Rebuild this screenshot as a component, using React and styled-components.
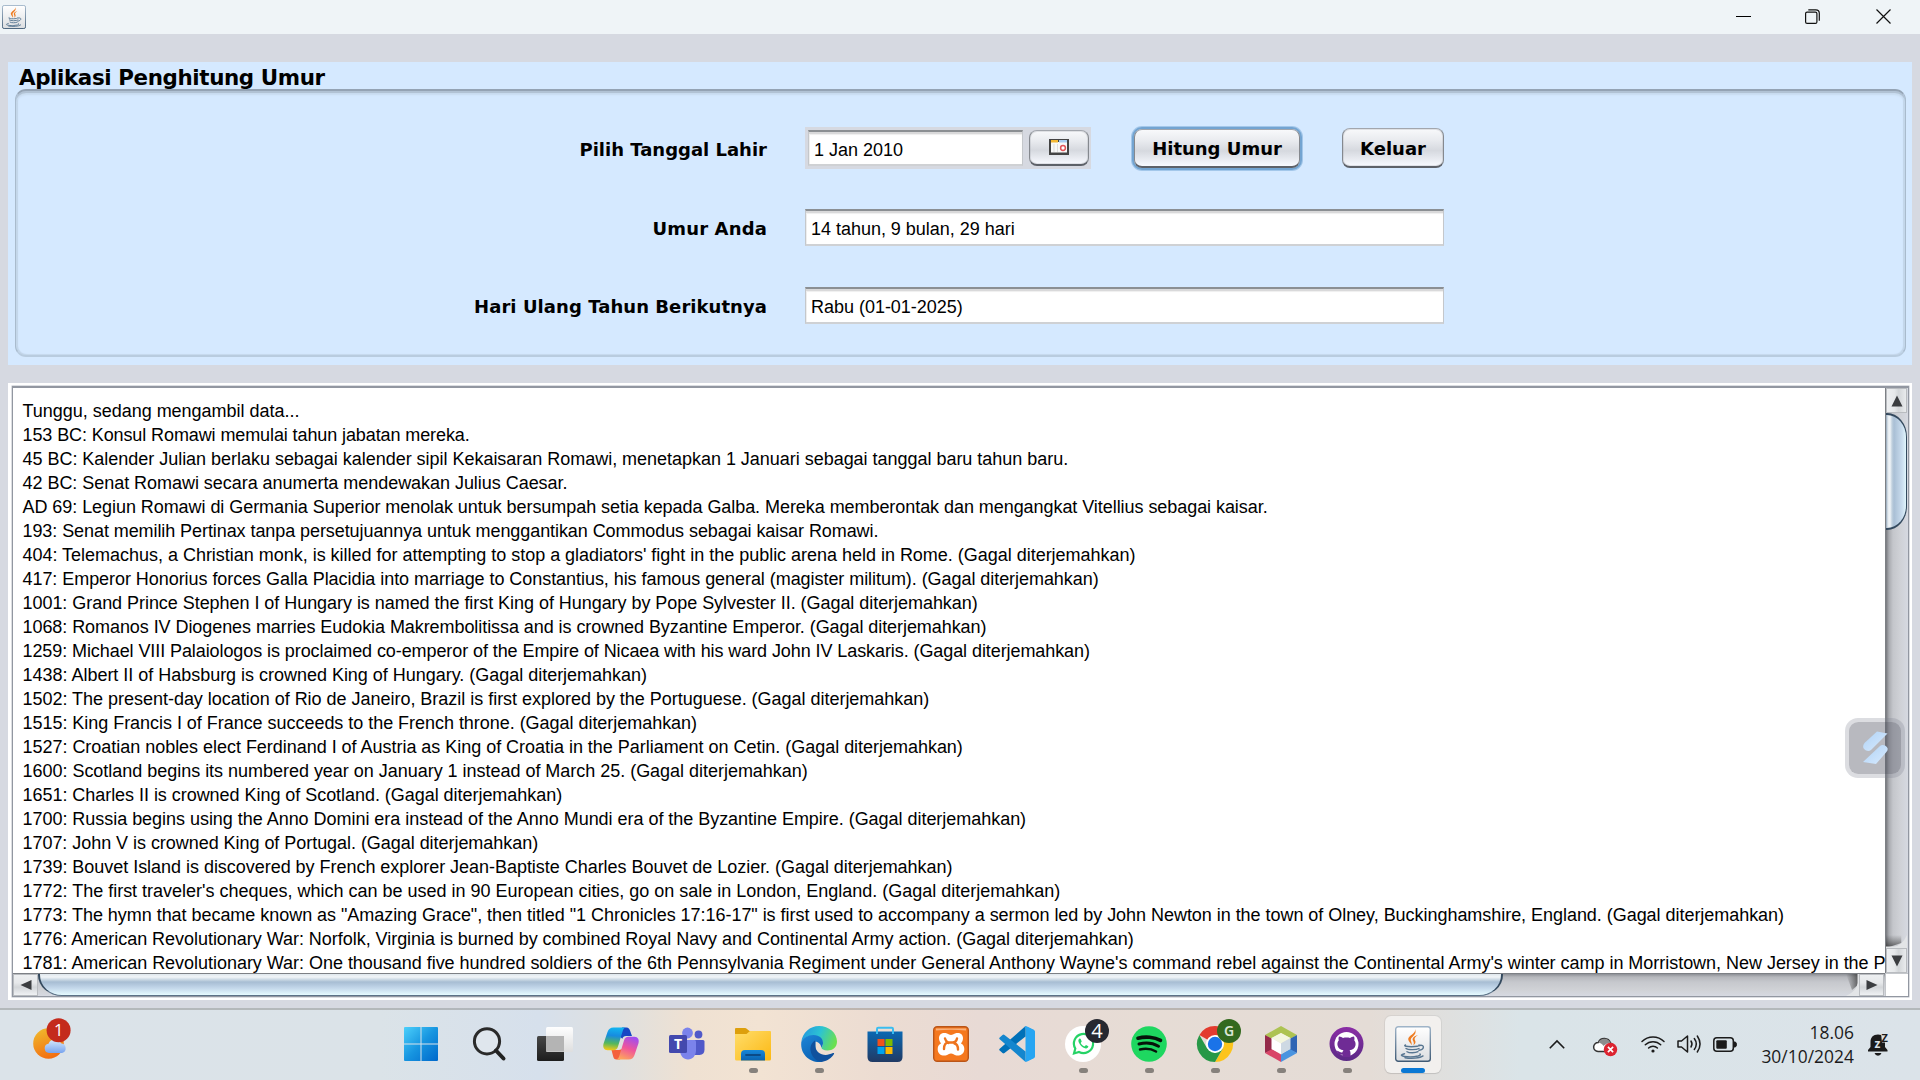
import React from "react";
import styled, { createGlobalStyle } from "styled-components";

const Global = createGlobalStyle`
  html, body { margin: 0; padding: 0; }
  body { width: 1920px; height: 1080px; overflow: hidden; background: #d6d9e1; }
  * { box-sizing: border-box; }
`;

const sans = `"Liberation Sans", Arial, sans-serif`;
const bold = `"DejaVu Sans", Verdana, sans-serif`;
const segoe = `"Open Sans", "Segoe UI", sans-serif`;

const Screen = styled.div`
  position: relative;
  display: flex;
  flex-direction: column;
  width: 1920px;
  height: 1080px;
  overflow: hidden;
  color: #000;
`;

const TitleBar = styled.header`
  display: flex;
  align-items: center;
  justify-content: space-between;
  flex: none;
  height: 34px;
  padding: 0 29px 0 2px;
  background: #eff4f7;
`;

const WindowButtons = styled.div`
  display: flex;
  align-items: center;
  height: 34px;
  padding-bottom: 2px;
`;

const WindowButton = styled.div`
  display: flex;
  justify-content: flex-end;
  width: ${(p) => p.$w}px;
  svg { display: block; }
`;

const Content = styled.main`
  display: flex;
  flex-direction: column;
  flex: none;
  gap: 18px;
  height: 974px;
  padding: 28px 8px 8px;
  background: #d6d9e1;
`;

const Panel = styled.section`
  display: flex;
  flex-direction: column;
  flex: none;
  height: 303px;
  padding: 0 6px 8px 7px;
  background: #d5e9ff;
`;

const PanelTitle = styled.h1`
  flex: none;
  height: 27px;
  margin: 0;
  padding-left: 4px;
  font: bold 21.4px/31px ${bold};
  letter-spacing: -0.38px;
  white-space: nowrap;
`;

const Frame = styled.div`
  display: flex;
  flex-direction: column;
  flex: 1;
  padding: 36px 0 0 300px;
  border: 1px solid #a9bbcd;
  border-top: 2px solid #94a3b4;
  border-bottom: 2px solid #b9ccdf;
  border-radius: 11px;
  box-shadow: inset 0 2px 0 #b1c2d4, inset 0 4px 2px #c8dbef,
    inset 2px 0 1px #c2d5e8, inset -2px 0 1px #c2d5e8, inset 0 -1px 1px #c8dbef;
`;

const FormRow = styled.div`
  display: flex;
  align-items: center;
  height: ${(p) => p.$h}px;
  margin-bottom: ${(p) => p.$mb || 0}px;
`;

const Label = styled.label`
  flex: none;
  width: 451px;
  margin-right: 38px;
  padding-top: ${(p) => p.$pt}px;
  font: bold 18px/24px ${bold};
  letter-spacing: ${(p) => p.$ls}px;
  text-align: right;
  white-space: nowrap;
`;

const Field = styled.div`
  width: ${(p) => p.$w}px;
  height: ${(p) => p.$h}px;
  padding: 6px 5px;
  border: 1px solid #c4c7cb;
  border-top: 2px solid #8b8f93;
  border-bottom: 2px solid #cfd1d4;
  background: #fff;
  box-shadow: inset 0 2px 0 #d9d9da, inset 0 3px 1px #efefef, inset 1px 0 0 #eee;
  font: 18px/24px ${sans};
  letter-spacing: -0.02px;
  white-space: nowrap;
`;

const DatePicker = styled.div`
  display: flex;
  flex: none;
  gap: 6px;
  width: 286px;
  height: 42px;
  padding: 3px 2px 3px 3px;
  background: #d6d9e1;
`;

const Button = styled.button`
  display: flex;
  align-items: center;
  justify-content: center;
  flex: none;
  width: ${(p) => p.$w}px;
  height: ${(p) => p.$h}px;
  margin: ${(p) => p.$m || 0};
  padding: ${(p) => p.$pad || "0 0 1px"};
  border: 1px solid #85898f;
  border-top-color: #a2a6ad;
  border-bottom: 2px solid #5d6168;
  border-radius: 8px;
  background: linear-gradient(#f8f9fb 0%, #e9ebef 30%, #d6d9df 58%, #dfe2e8 70%, #f8faff 100%);
  box-shadow: ${(p) => (p.$focus ? "0 0 0 2px #73a4d1, 0 0 0 3px #a3c7ea" : "inset 0 0 0 1px rgba(150,155,165,.25)")};
  color: #000;
  font: bold 18px/24px ${bold};
  white-space: nowrap;
`;

const ScrollPane = styled.section`
  display: flex;
  flex: none;
  height: 617px;
  padding: 3px 3px 3px 4px;
  background: #fff;
`;

const Viewport = styled.div`
  display: grid;
  grid-template-columns: 1fr 23px;
  grid-template-rows: 1fr 23px;
  width: 1897px;
  border: 1px solid #9297a1;
  border-top: 2px solid #9297a1;
  box-shadow: 0 0 0 0.5px #b9bcc4;
  overflow: hidden;
`;

const TextArea = styled.div`
  min-width: 0;
  padding: 11px 0 0 9.5px;
  background: #fff;
  overflow: hidden;
`;

const Line = styled.div`
  height: 24px;
  font: 18px/24px ${sans};
  letter-spacing: ${(p) => p.$ls || 0}px;
  white-space: pre;
`;

const VBar = styled.div`
  display: flex;
  flex-direction: column;
  min-height: 0;
  padding-right: 1px;
  border-left: 1px solid #7d8085;
  background: linear-gradient(90deg, #77797e 0, #a9abb0 3px, #c4c6cb 7px, #cfd1d6 14px, #d6d9e1 22px);
`;

const HBar = styled.div`
  display: flex;
  min-width: 0;
  padding-right: 1px;
  border-top: 1px solid #7d8085;
  background: linear-gradient(#8d9096 0, #b5b7bc 3px, #c6c8cd 8px, #d0d2d6 16px, #d6d9e1 22px);
`;

const ArrowCell = styled.div`
  display: flex;
  align-items: center;
  justify-content: center;
  flex: none;
  width: ${(p) => p.$w}px;
  height: ${(p) => p.$h}px;
  background: ${(p) =>
    p.$v
      ? "linear-gradient(90deg, #eef0f2, #e6e8ea 40%, #d3d6d9 60%, #eceef0)"
      : "linear-gradient(#eef0f2, #e6e8ea 40%, #d3d6d9 60%, #f3f5f7)"};
  box-shadow: inset 0 0 0 1px #b9bcc0;
`;

const VThumb = styled.div`
  flex: none;
  width: 21px;
  height: 117px;
  border: 2px solid #33495e;
  border-left: 0;
  border-right-width: 1px;
  border-radius: 0 20px 20px 0 / 0 24px 24px 0;
  background: linear-gradient(90deg, #8ea2b5 0, #e4ebf1 2px, #f1f5f8 4px, #c0d0de 6px, #a9bfd5 8px, #c9dcee 16px, #e6fbff 21px);
`;

const HThumb = styled.div`
  flex: none;
  width: 1465px;
  height: 22px;
  border: 1px solid #5c7287;
  border-left: 2px solid #33495e;
  border-right: 2px solid #33495e;
  border-top: 0;
  border-radius: 0 0 24px 24px / 0 0 21px 21px;
  background: linear-gradient(#dfe7ed 0, #f1f5f8 3px, #c5d4e1 6px, #a7bdd3 8px, #c3d7ea 14px, #e6fbff 21px);
`;

const Spacer = styled.div`
  flex: 1;
`;

const Corner = styled.div`
  background: #fff;
  border-left: 1px solid #c4c7cb;
  border-top: 1px solid #c4c7cb;
`;

const FloatingWidget = styled.div`
  position: absolute;
  left: 1845px;
  top: 718px;
  width: 60px;
  height: 60px;
  border: 4px solid rgba(120, 122, 138, 0.26);
  border-radius: 13px;
  background: rgba(85, 87, 102, 0.42);
  background-clip: padding-box;
  svg { display: block; }
`;

const Taskbar = styled.footer`
  display: flex;
  align-items: stretch;
  flex: none;
  height: 72px;
  padding-right: 31px;
  border-top: 2px solid rgba(130, 130, 130, 0.45);
  background: linear-gradient(90deg, #dbe3e9 0, #dbe3e8 380px, #d6e0ec 540px, #dfe0df 620px, #efe1d2 690px, #f2e3d3 760px,
      #ecdcd2 880px, #e8dad5 980px, #e6dcd5 1150px, #e4dcd6 1370px, #dfe0df 1450px, #dae4e8 1520px, #dbe3e9 1920px)
    border-box;
`;

const Widgets = styled.div`
  flex: none;
  width: 388px;
  padding: 8px 0 0 33px;
`;

const TaskCell = styled.div`
  display: flex;
  flex-direction: column;
  align-items: center;
  flex: none;
  width: 66px;
  margin-right: ${(p) => p.$mr || 0}px;
  padding-top: 6px;
`;

const Tile = styled.div`
  display: flex;
  flex-direction: column;
  align-items: center;
  width: 56px;
  height: 57px;
  padding-top: 10px;
  border-radius: 6px;
  background: ${(p) => (p.$active ? "#f2f0ee" : "transparent")};
  box-shadow: ${(p) => (p.$active ? "0 0 0 1px rgba(160,160,160,.18), 0 1px 1px rgba(0,0,0,.1)" : "none")};
  svg { display: block; flex: none; overflow: visible; }
`;

const Indicator = styled.div`
  flex: none;
  width: ${(p) => (p.$active ? 24 : 9)}px;
  height: 5px;
  margin-top: 6px;
  border-radius: 3px;
  background: ${(p) => (p.$active ? "#0a78d4" : "#86817c")};
`;

const Tray = styled.div`
  display: flex;
  align-items: center;
  height: 68px;
  svg { display: block; flex: none; overflow: visible; }
`;

const TrayItem = styled.div`
  flex: none;
  margin-left: ${(p) => p.$ml}px;
  padding-top: ${(p) => p.$pt || 0}px;
`;

const Clock = styled.div`
  flex: none;
  width: 117px;
  margin-right: 14px;
  font: 17.4px/24px ${segoe};
  letter-spacing: 0.03px;
  color: #1b1b1b;
  text-align: right;
`;

function JavaIcon({ size, id }) {
  return (
    <svg width={size} height={size} viewBox="0 0 36 36">
      <defs>
        <linearGradient id={id} x2="0" y2="1"><stop stopColor="#fff" /><stop offset="1" stopColor="#dcdee1" /></linearGradient>
        <linearGradient id={id + "b"} x2="0" y2="1"><stop stopColor="#9fb4c8" /><stop offset="1" stopColor="#3f5a75" /></linearGradient>
      </defs>
      <rect x=".7" y=".7" width="34.6" height="34.6" rx="2.5" fill={`url(#${id})`} stroke={`url(#${id}b)`} strokeWidth="1.4" />
      <path d="M20 3c1.500 4.500-7 6.500-6.800 10.300.1 2.200 2.600 3.500 3.300 6 .8-2.900-1.200-4.200-.6-6.200.8-2.700 6.600-4.600 4.100-10.100zM23 9c-4 1.200-6 3-5.200 5.200.6 1.600 1.700 2.500.5 5.100 3-2.300 2.300-4 1.500-5.300-.8-1.500.5-3.200 3.200-5z" fill="#ee7c22" />
      <g fill="none" stroke="#587691" strokeWidth="1.400" strokeLinecap="round">
        <path d="M10.500 19c-5 2.300 16 2.300 13.500 0" />
        <path d="M11 22.500c2 1.600 10.500 1.500 13 0M12 25.700c2 1.400 8.500 1.400 11 0" />
        <path d="M24.500 19.500c5.500-1.200 5 4-.5 4.800" />
        <path d="M9.500 27.700c-9.500 2.300 5 4.300 13.500 2.300 1.500-.4 3-1 2-2" />
        <path d="M10 31.700c6 1 15 .6 18-1.800" />
      </g>
    </svg>
  );
}

const Badge = ({ x, y, r, fill, color, label, size, weight, family }) => (
  <g>
    <circle cx={x} cy={y} r={r} fill={fill} />
    <text x={x} y={y + size * 0.36} textAnchor="middle" fontSize={size} fontWeight={weight} fill={color} fontFamily={family || "Open Sans, sans-serif"}>{label}</text>
  </g>
);

const WeatherIcon = () => (
  <svg width="40" height="44" viewBox="0 0 40 44">
    <defs>
      <linearGradient id="sun" x1=".2" y1="0" x2=".6" y2="1"><stop stopColor="#f0b92c" /><stop offset="1" stopColor="#f26c12" /></linearGradient>
      <linearGradient id="cloud" x2="0" y2="1"><stop stopColor="#d6e9fd" /><stop offset="1" stopColor="#78a4ef" /></linearGradient>
    </defs>
    <circle cx="15.500" cy="25.500" r="15.300" fill="url(#sun)" />
    <path d="M16 35a4.700 4.700 0 0 1-.5-9.300 7 7 0 0 1 12.500-.5 5 5 0 0 1 1 9.800z" fill="url(#cloud)" />
    <Badge x={25.600} y={12.300} r={12} fill="#c42b1c" color="#fff" label="1" size={16.500} weight={400} />
  </svg>
);

const S = ({ children }) => <svg width="36" height="36" viewBox="0 0 36 36">{children}</svg>;

const WindowsIcon = () => (
  <S>
    <defs><linearGradient id="win" x2="1" y2="1"><stop stopColor="#4cd0fb" /><stop offset=".5" stopColor="#1795e0" /><stop offset="1" stopColor="#0068cb" /></linearGradient></defs>
    <path d="M2 1h15.500v16.500H1V2q0-1 1-1zM18.500 1H34q1 0 1 1v15.500H18.500zM1 18.500h16.500V35H2q-1 0-1-1zM18.500 18.500H35V34q0 1-1 1H18.500z" fill="url(#win)" />
  </S>
);

const SearchIcon = () => (
  <S>
    <circle cx="16" cy="15.300" r="12.600" fill="#e4e9ef" fillOpacity=".6" stroke="#2a2a2a" strokeWidth="3" />
    <path d="M25 24.500l7.500 8" stroke="#222" strokeWidth="4" strokeLinecap="round" />
  </S>
);

const TaskViewIcon = () => (
  <S>
    <defs>
      <linearGradient id="tv1" x2="0" y2="1"><stop stopColor="#474747" /><stop offset="1" stopColor="#1d1d1d" /></linearGradient>
      <linearGradient id="tv2" x2="0" y2="1"><stop stopColor="#fff" /><stop offset="1" stopColor="#dedede" /></linearGradient>
    </defs>
    <rect x="0" y="10" width="27" height="25" rx="1.500" fill="url(#tv1)" />
    <rect x="9" y="1" width="27" height="25" rx="1.500" fill="url(#tv2)" fillOpacity=".97" />
    <rect x="9" y="10" width="18" height="15.500" fill="#b4b4b4" />
  </S>
);

const CopilotIcon = () => (
  <S>
    <defs>
      <linearGradient id="c1" x1=".4" x2=".3" y2="1"><stop stopColor="#12b4f0" /><stop offset=".35" stopColor="#178be0" /><stop offset=".7" stopColor="#55b85c" /><stop offset="1" stopColor="#f5c916" /></linearGradient>
      <linearGradient id="c2" x1=".7" x2=".3" y2="1"><stop stopColor="#a04df0" /><stop offset=".5" stopColor="#f0559a" /><stop offset="1" stopColor="#fda65c" /></linearGradient>
    </defs>
    <path d="M19 1.500h4.500c2 0 3 1.300 3.600 3.200L29 10h-6c-2 0-3 .8-3.600 2.800L16 10z" fill="#1747c4" />
    <path d="M10 24h6l3.500-1L17 33.500h-3.500c-2 0-2.800-1.200-3.300-3L8.500 24z" fill="#f4603c" />
    <path d="M10.500 1.500H23c-1.800.3-2.600 1.400-3.200 3.200L15 20.500c-.8 2.600-2 3.700-4.500 3.700H4.500C1 24.200-.5 21 .6 17.500L4.500 6C5.600 3 7.300 1.500 10.500 1.500z" fill="url(#c1)" />
    <path d="M25.500 33.500H13c1.800-.3 2.600-1.400 3.200-3.200L21 14.500c.8-2.600 2-3.700 4.500-3.700h6c3.500 0 5 3.200 3.900 6.700L31.500 29c-1.100 3-2.800 4.500-6 4.500z" fill="url(#c2)" />
  </S>
);

const TeamsIcon = () => (
  <S>
    <circle cx="29.500" cy="8.500" r="3.900" fill="#5059c9" />
    <path d="M25 14h9q1.500 0 1.500 1.500v8q0 5-5 5.500H25z" fill="#5059c9" />
    <circle cx="18.500" cy="7" r="5.400" fill="#7b83eb" />
    <path d="M11 14h14.500q1.500 0 1.500 1.500v9c0 5-3.500 9-8 9s-8-4-8-9z" fill="#7b83eb" />
    <rect x="0" y="9" width="18" height="18" rx="1.500" fill="#4349ae" />
    <text x="9" y="23" textAnchor="middle" fontFamily="Open Sans, sans-serif" fontWeight="700" fontSize="14" fill="#fff">T</text>
  </S>
);

const ExplorerIcon = () => (
  <S>
    <defs>
      <linearGradient id="fo" x2="1" y2="1"><stop stopColor="#ffdd6b" /><stop offset="1" stopColor="#fcb813" /></linearGradient>
      <linearGradient id="fb" x2="0" y2="1"><stop stopColor="#1687d9" /><stop offset="1" stopColor="#0a63b0" /></linearGradient>
    </defs>
    <path d="M0 3q0-1 1-1h9q1 0 2 1l2.500 2H35v6H0z" fill="#dd9f0c" />
    <path d="M0 8h11.500L15 5h20q1 0 1 1v27q0 1.500-1.500 1.500h-33Q0 34.500 0 33z" fill="url(#fo)" />
    <path d="M6 34.500V28q0-4 4-4h16q4 0 4 4v6.500z" fill="url(#fb)" />
    <path d="M11 29h14" stroke="#0b4a86" strokeWidth="1.800" strokeLinecap="round" />
  </S>
);

const EdgeIcon = () => (
  <S>
    <defs>
      <linearGradient id="e1" y1=".2" x2="1" y2=".5"><stop stopColor="#2396e0" /><stop offset=".5" stopColor="#2cc3d3" /><stop offset="1" stopColor="#6be04f" /></linearGradient>
      <linearGradient id="e2" x2=".5" y2="1"><stop stopColor="#1d86d8" /><stop offset="1" stopColor="#0b62b4" /></linearGradient>
    </defs>
    <path d="M.3 16C1.500 6.500 9 0 18 0c10 0 18 7 18 15.500 0 6-4.500 9-9.500 9-4 0-6-1.500-6-2.700 0-.9 1.500-1.600 1.500-4.300 0-4-4-7.500-9-7.500C7 10 2 12 .3 16z" fill="url(#e1)" />
    <path d="M.3 16C2 12 7 9 12.500 9c6 0 10 4 9.500 8.500-.2 2-1 3-1.500 4.300-.8-3.500-3-6-6-6 0 5-.5 10 3.500 15 2 2.500 3 4 3.500 4.900C19.500 36 18 36 18 36 8 36-1 28 .3 16z" fill="url(#e2)" />
    <path d="M14 14.500c-3 2-5 5.500-4.500 9.500C10.200 30.500 15.500 36 21.500 35.700c5-.7 9-3.600 11.500-7.700.4-.8-.3-1.300-1-.9-9 4.400-17 .2-17.700-6.600-.2-2.300.2-4.500-.3-6z" fill="#10519d" />
  </S>
);

const StoreIcon = () => (
  <S>
    <defs><linearGradient id="st" x2="0" y2="1"><stop stopColor="#0b68b2" /><stop offset="1" stopColor="#213a64" /></linearGradient></defs>
    <path d="M.5 5.500h35V31q0 5-5 5h-25q-5 0-5-5z" fill="url(#st)" />
    <path d="M10 8V3q0-1.200 1.200-1.200h13.600Q26 1.800 26 3v5" fill="none" stroke="#3bbdf0" strokeWidth="2" />
    <path d="M10.500 13h7v7h-7z" fill="#f1511b" /><path d="M18.500 13h7v7h-7z" fill="#7fba00" />
    <path d="M10.500 21h7v7h-7z" fill="#00a3ee" /><path d="M18.500 21h7v7h-7z" fill="#fdb800" />
  </S>
);

const XamppIcon = () => (
  <S>
    <rect x=".7" y=".7" width="34.600" height="34.600" rx="3.500" fill="#f5781e" stroke="#ba5518" strokeWidth="1.400" />
    <path d="M3 2.500h30v2q-15-1.500-30 0z" fill="#f9b17c" />
    <path d="M6 12c0-4 4-6 8-4.500 1.700.6 2.500 1.500 4 1.500s2.300-.9 4-1.500c4-1.500 8 .5 8 4.500 0 2.500-1 4-2 5.500 2.500 1 3.500 3.500 3.300 6-.3 4.500-4 6.500-7.800 6-2.500-.4-3.500-2-5.500-2s-3 1.600-5.500 2c-4.300.6-7.700-1.800-7.800-6-.1-2.700 1-5 3.300-6-1-1.500-2-3-2-5.500z" fill="#fff" />
    <path d="M12 12.500c.5 2 1.500 3.500 3.500 4.500M24 12.500c-.5 2.500-1.500 4-4.500 4h-4c-2.500 0-4.500 2-4.500 6.500M21.500 17.500c2.500.5 3.500 2.500 3.500 6" fill="none" stroke="#ee741e" strokeWidth="2.400" strokeLinecap="round" />
  </S>
);

const VSCodeIcon = () => (
  <S>
    <path d="M26.500 0L35 4v28l-8.500 4z" fill="#29a8f2" />
    <path d="M26.500 0v10.500L5.500 27q-1 .8-2 0L.7 24.600q-1-.9 0-1.800z" fill="#0070b8" />
    <path d="M26.500 36V25.500L5.500 9q-1-.8-2 0L.7 11.400q-1 .9 0 1.800z" fill="#1486ce" />
    <path d="M24.500 1.500Q27 0 28.500.7L35 4q1 .5 1 1.500v25q0 1-1 1.500l-6.500 3.300Q27 36 24.500 34c1.500.6 2.500-.2 2.500-1.700V3.500c0-1.500-1-2.500-2.500-2z" fill="#27a5f2" />
  </S>
);

const WhatsAppIcon = () => (
  <S>
    <circle cx="18" cy="18" r="18" fill="#fff" />
    <path d="M9 27.500l1.300-5A9.600 9.600 0 1 1 14 26z" fill="#fff" stroke="#25d366" strokeWidth="2.200" />
    <path d="M14.500 12.500c-1.500 1-1.700 3 .3 5.800s5 4.700 7 3.900c1.300-.5 1.600-1.400 1.500-2l-2.300-1.200-1.500 1.400c-2-.7-3.200-2.200-3.800-3.500l1-1.400-1-2.500c-.2-.5-.8-.7-1.200-.5z" fill="#25d366" />
    <Badge x={32} y={5} r={12} fill="#262830" color="#fff" label="4" size={20} weight={400} />
  </S>
);

const SpotifyIcon = () => (
  <S>
    <circle cx="18" cy="18" r="17.800" fill="#1ed760" />
    <g fill="none" stroke="#06130a" strokeLinecap="round">
      <path d="M7 12.200c7-2 16.500-1.300 22.500 2.200" strokeWidth="3.600" />
      <path d="M8 18c6.500-1.800 14-1 19.500 2.200" strokeWidth="3" />
      <path d="M9 23.500c6-1.300 11.500-.6 16 2" strokeWidth="2.500" />
    </g>
  </S>
);

const ChromeIcon = () => (
  <S>
    <path d="M18 18L2.400 9A18 18 0 0 1 33.600 9z" fill="#e33b2e" />
    <path d="M18 9h15.600A18 18 0 0 1 18 36l7.800-13.500z" fill="#fcc41c" />
    <path d="M2.400 9L10.200 22.500 18 27l7.800-4.500L18 36A18 18 0 0 1 2.400 9z" fill="#279847" />
    <circle cx="18" cy="18" r="9" fill="#fff" /><circle cx="18" cy="18" r="7.200" fill="#1a73e8" />
    <Badge x={32} y={5} r={12} fill="#33691e" color="#dbe6d5" label="G" size={14} weight={600} family="Noto Sans, sans-serif" />
  </S>
);

const NetBeansIcon = () => (
  <S>
    <path d="M18 0l16 9-6 3.500-10-5.500L8 12.500 2 9z" fill="#adc352" />
    <path d="M2 9l7 3.800V24L2 27z" fill="#942a4a" />
    <path d="M34 9l-7 3.800V24l7 3z" fill="#2f65b4" />
    <path d="M2 27l7-4 9 5.500V36z" fill="#d94568" />
    <path d="M34 27l-7-4-9 5.500V36z" fill="#4a94e0" />
    <path d="M18 7l9.500 5L18 17.500 8.500 12z" fill="#f3f6df" />
    <path d="M8.500 12L18 17.500V28l-9.500-5z" fill="#fff" />
    <path d="M27.500 12L18 17.500V28l9.500-5z" fill="#ced9e3" />
  </S>
);

const GitHubIcon = () => (
  <S>
    <defs><linearGradient id="gh" x2="0" y2="1"><stop stopColor="#8a2da5" /><stop offset="1" stopColor="#5b2a86" /></linearGradient></defs>
    <circle cx="17.500" cy="18" r="17" fill="url(#gh)" />
    <circle cx="17.500" cy="18" r="12" fill="#fff" />
    <path d="M10 10.500c1.700 0 3 .8 4 1.500 2-.6 5-.6 7 0 1-.7 2.300-1.500 4-1.500.6 1.500.6 2.700.2 3.800 1.300 1.500 1.600 3.200 1.300 5-.5 3-2.800 4.500-6 4.900.7.8 1 1.600 1 2.800v4h-8V28.500c-3 .6-4-.8-4.700-2.100-.4-.8-1-1.100-1.500-1.500 2.500-.5 3 2.200 6.200 1.300.1-.8.400-1.500 1-2-3.200-.4-5.500-1.900-6-4.900-.3-1.800 0-3.500 1.300-5-.4-1.100-.4-2.300.2-3.800z" fill="#6f2b95" />
  </S>
);

const TaskbarJavaIcon = () => <JavaIcon size={36} id="jt" />;

const icons = [
  { I: WindowsIcon, mr: 2 }, { I: SearchIcon }, { I: TaskViewIcon }, { I: CopilotIcon }, { I: TeamsIcon }, { I: ExplorerIcon, run: 1 },
  { I: EdgeIcon, run: 1 }, { I: StoreIcon }, { I: XamppIcon }, { I: VSCodeIcon }, { I: WhatsAppIcon, run: 1 }, { I: SpotifyIcon, run: 1 },
  { I: ChromeIcon, run: 1 }, { I: NetBeansIcon, run: 1 }, { I: GitHubIcon, run: 1 }, { I: TaskbarJavaIcon, run: 1, active: 1 },
];

const lines = [
  ["Tunggu, sedang mengambil data...", -0.02],
  ["153 BC: Konsul Romawi memulai tahun jabatan mereka.", -0.1],
  ["45 BC: Kalender Julian berlaku sebagai kalender sipil Kekaisaran Romawi, menetapkan 1 Januari sebagai tanggal baru tahun baru.", -0.024],
  ["42 BC: Senat Romawi secara anumerta mendewakan Julius Caesar.", -0.038],
  ["AD 69: Legiun Romawi di Germania Superior menolak untuk bersumpah setia kepada Galba. Mereka memberontak dan mengangkat Vitellius sebagai kaisar.", -0.057],
  ["193: Senat memilih Pertinax tanpa persetujuannya untuk menggantikan Commodus sebagai kaisar Romawi.", -0.077],
  ["404: Telemachus, a Christian monk, is killed for attempting to stop a gladiators' fight in the public arena held in Rome. (Gagal diterjemahkan)", -0.019],
  ["417: Emperor Honorius forces Galla Placidia into marriage to Constantius, his famous general (magister militum). (Gagal diterjemahkan)", -0.055],
  ["1001: Grand Prince Stephen I of Hungary is named the first King of Hungary by Pope Sylvester II. (Gagal diterjemahkan)", -0.045],
  ["1068: Romanos IV Diogenes marries Eudokia Makrembolitissa and is crowned Byzantine Emperor. (Gagal diterjemahkan)", -0.067],
  ["1259: Michael VIII Palaiologos is proclaimed co-emperor of the Empire of Nicaea with his ward John IV Laskaris. (Gagal diterjemahkan)", -0.084],
  ["1438: Albert II of Habsburg is crowned King of Hungary. (Gagal diterjemahkan)", -0.02],
  ["1502: The present-day location of Rio de Janeiro, Brazil is first explored by the Portuguese. (Gagal diterjemahkan)", -0.021],
  ["1515: King Francis I of France succeeds to the French throne. (Gagal diterjemahkan)", -0.034],
  ["1527: Croatian nobles elect Ferdinand I of Austria as King of Croatia in the Parliament on Cetin. (Gagal diterjemahkan)", -0.027],
  ["1600: Scotland begins its numbered year on January 1 instead of March 25. (Gagal diterjemahkan)", -0.023],
  ["1651: Charles II is crowned King of Scotland. (Gagal diterjemahkan)", -0.04],
  ["1700: Russia begins using the Anno Domini era instead of the Anno Mundi era of the Byzantine Empire. (Gagal diterjemahkan)", -0.033],
  ["1707: John V is crowned King of Portugal. (Gagal diterjemahkan)", -0.043],
  ["1739: Bouvet Island is discovered by French explorer Jean-Baptiste Charles Bouvet de Lozier. (Gagal diterjemahkan)", -0.031],
  ["1772: The first traveler's cheques, which can be used in 90 European cities, go on sale in London, England. (Gagal diterjemahkan)", -0.008],
  ["1773: The hymn that became known as \"Amazing Grace\", then titled \"1 Chronicles 17:16-17\" is first used to accompany a sermon led by John Newton in the town of Olney, Buckinghamshire, England. (Gagal diterjemahkan)", -0.039],
  ["1776: American Revolutionary War: Norfolk, Virginia is burned by combined Royal Navy and Continental Army action. (Gagal diterjemahkan)", -0.033],
  ["1781: American Revolutionary War: One thousand five hundred soldiers of the 6th Pennsylvania Regiment under General Anthony Wayne's command rebel against the Continental Army's winter camp in Morristown, New Jersey in the P", -0.029],
];

const Arrow = ({ d }) => (
  <svg width="12" height="12" viewBox="0 0 12 12"><path d={d} fill="#3b3d40" /></svg>
);

export default function App() {
  return (
    <Screen>
      <Global />
      <TitleBar>
        <JavaIcon size={24} id="ja" />
        <WindowButtons>
          <WindowButton $w={15}><svg width="15" height="15" viewBox="0 0 15 15"><path d="M0 7.500h15" stroke="#000" /></svg></WindowButton>
          <WindowButton $w={69}>
            <svg width="15" height="15" viewBox="0 0 15 15" fill="none" stroke="#111" strokeWidth="1.200">
              <rect x=".6" y="3.100" width="11.300" height="11.300" rx="1.500" /><path d="M3.300.8h7.500q3.500 0 3.500 3.500v7.500" />
            </svg>
          </WindowButton>
          <WindowButton $w={71}><svg width="15" height="15" viewBox="0 0 15 15"><path d="M.5.5l14 14M14.500.5l-14 14" stroke="#111" strokeWidth="1.200" /></svg></WindowButton>
        </WindowButtons>
      </TitleBar>

      <Content>
        <Panel>
          <PanelTitle>Aplikasi Penghitung Umur</PanelTitle>
          <Frame>
            <FormRow $h={42} $mb={40}>
              <Label $ls={0} $pt={4}>Pilih Tanggal Lahir</Label>
              <DatePicker>
                <Field $w={215} $h={36}>1 Jan 2010</Field>
                <Button $w={60} $h={36}>
                  <svg width="20" height="16" viewBox="0 0 20 16">
                    <rect width="20" height="16" fill="#444" /><path d="M2 3h16v10.500H2z" fill="#f8f8f8" /><path d="M2 1h7v2.500H2z" fill="#f5b935" />
                    <path d="M10 1h8v2.500h-8z" fill="#a9cdf0" /><path d="M5 5v8M8.500 5v8" stroke="#ddd" /><circle cx="14" cy="9" r="2.400" fill="#fff" stroke="#e2565a" strokeWidth="1.500" />
                  </svg>
                </Button>
              </DatePicker>
              <Button $w={166} $h={39} $m="0 0 0 43px" $pad="3px 0 0" $focus>Hitung Umur</Button>
              <Button $w={102} $h={40} $m="0 0 0 42px" $pad="3px 0 0">Keluar</Button>
            </FormRow>
            <FormRow $h={37} $mb={41}>
              <Label $ls={0.15} $pt={2}>Umur Anda</Label>
              <Field $w={639} $h={37}>14 tahun, 9 bulan, 29 hari</Field>
            </FormRow>
            <FormRow $h={37}>
              <Label $ls={0.06} $pt={2}>Hari Ulang Tahun Berikutnya</Label>
              <Field $w={639} $h={37}>Rabu (01-01-2025)</Field>
            </FormRow>
          </Frame>
        </Panel>

        <ScrollPane>
          <Viewport>
            <TextArea>{lines.map(([text, spacing]) => <Line key={text} $ls={spacing}>{text}</Line>)}</TextArea>
            <VBar>
              <ArrowCell $v $w={21} $h={25}><Arrow d="M6 .5l5.500 11H.5z" /></ArrowCell>
              <VThumb />
              <Spacer />
              <svg width="21" height="13" viewBox="0 0 22 13" preserveAspectRatio="none"><defs><linearGradient id="vs" x2="0" y2="1"><stop stopColor="#333" stopOpacity="0" /><stop offset="1" stopColor="#222" /></linearGradient></defs><path d="M0 0h16v8L0 13z" fill="url(#vs)" opacity=".7" /><path d="M0 13h22V0q-5 11-14 11.500H0z" fill="#e3e5e7" /></svg>
              <ArrowCell $v $w={21} $h={25}><Arrow d="M6 11.500L.5.500h11z" /></ArrowCell>
            </VBar>
            <HBar>
              <ArrowCell $w={25} $h={22}><Arrow d="M.5 6l11-5v10z" /></ArrowCell>
              <HThumb />
              <Spacer />
              <svg width="13" height="22" viewBox="0 0 13 22"><defs><linearGradient id="hs"><stop stopColor="#333" stopOpacity="0" /><stop offset="1" stopColor="#222" /></linearGradient></defs><path d="M0 0h13v10L6 16z" fill="url(#hs)" opacity=".7" /><path d="M13 0v22H0q11-5 11.500-13V0z" fill="#e3e5e7" /></svg>
              <ArrowCell $w={25} $h={22}><Arrow d="M11.500 6l-11-5v10z" /></ArrowCell>
            </HBar>
            <Corner />
          </Viewport>
        </ScrollPane>
      </Content>

      <Taskbar>
        <Widgets><WeatherIcon /></Widgets>
        {icons.map(({ I, run, active, mr }, i) => (
          <TaskCell key={i} $mr={mr}>
            <Tile $active={active}>
              <I />
              {run && <Indicator $active={active} />}
            </Tile>
          </TaskCell>
        ))}
        <Spacer />
        <Tray>
          <TrayItem $ml={0}>
            <svg width="16" height="9" viewBox="0 0 16 9"><path d="M.8 8.300L8 1l7.200 7.300" fill="none" stroke="#1b1b1b" strokeWidth="1.600" /></svg>
          </TrayItem>
          <TrayItem $ml={28} $pt={3}>
            <svg width="24" height="20" viewBox="0 0 24 20">
              <path d="M5 15.500a4.500 4.500 0 0 1 .3-9 6.500 6.500 0 0 1 12.200.5A5 5 0 0 1 19 15.500z" fill="#fff" stroke="#333" strokeWidth="1.500" />
              <path d="M5.500 6.500a6.500 6.500 0 0 1 12 .5c-3 0-5 1-7 3-1-2-3-3-5-3.500z" fill="#8c8c8c" />
              <circle cx="17.500" cy="13.500" r="6.700" fill="#dc2430" /><path d="M14.900 10.900l5.200 5.200M20.100 10.900l-5.200 5.200" stroke="#fff" strokeWidth="1.700" />
            </svg>
          </TrayItem>
          <TrayItem $ml={24}>
            <svg width="24" height="18" viewBox="0 0 24 18" fill="none" stroke="#1b1b1b" strokeWidth="1.500" strokeLinecap="round">
              <path d="M1 6.500a15.500 15.500 0 0 1 22 0M4.300 9.800a11 11 0 0 1 15.400 0M7.600 13a6.300 6.300 0 0 1 8.800 0" /><circle cx="12" cy="16" r="1.600" fill="#1b1b1b" stroke="none" />
            </svg>
          </TrayItem>
          <TrayItem $ml={12}>
            <svg width="24" height="20" viewBox="0 0 24 20" fill="none" stroke="#1b1b1b" strokeWidth="1.500" strokeLinecap="round" strokeLinejoin="round">
              <path d="M1 7v6h3.500l6 5V2l-6 5zM14 7q2 3 0 6M17.300 4.500q4 5.500 0 11M20.300 2q5.500 8 0 16" />
            </svg>
          </TrayItem>
          <TrayItem $ml={12}>
            <svg width="24" height="15" viewBox="0 0 24 15">
              <rect x=".8" y=".8" width="19.500" height="13.400" rx="3" fill="none" stroke="#1b1b1b" strokeWidth="1.500" />
              <rect x="3.300" y="3.300" width="10.500" height="8.400" rx="1" fill="#1b1b1b" /><path d="M21.500 4.800q2 .2 2 2.700t-2 2.700z" fill="#1b1b1b" stroke="#1b1b1b" />
            </svg>
          </TrayItem>
          <Clock>18.06<br />30/10/2024</Clock>
          <TrayItem $ml={0} $pt={2}>
            <svg width="21" height="24" viewBox="0 0 21 24">
              <path d="M10 1.500c-5 0-7.500 3-7.500 7.500v5L0 17v1.500h19.500V17L17 14V9c0-4-2-7.500-7-7.500zM6.500 20h7q-1 2.800-3.500 2.800T6.500 20z" fill="#1b1b1b" />
              <path d="M13 0h8v9.500h-7z" fill="#dbe3e9" />
              <text x="6.500" y="14.500" fontSize="12" fontWeight="700" fill="#dbe3e9" fontFamily="Open Sans, sans-serif">z</text>
              <text x="13.500" y="8.500" fontSize="11" fontWeight="700" fill="#1b1b1b" fontFamily="Open Sans, sans-serif">Z</text>
            </svg>
          </TrayItem>
        </Tray>
      </Taskbar>

      <FloatingWidget>
        <svg width="52" height="52" viewBox="0 0 52 52">
          <defs><linearGradient id="fw" x2="1" y2="1"><stop stopColor="#b0d2f5" /><stop offset="1" stopColor="#d8ebff" /></linearGradient></defs>
          <path d="M28 9.500l10.500 2L22 28q-2 1.500-5 .5-5-3-1.500-7.500z" fill="url(#fw)" />
          <path d="M14 40l17-16q2-1.500 5-.500 5 3 1 7L27 42z" fill="url(#fw)" />
        </svg>
      </FloatingWidget>
    </Screen>
  );
}
